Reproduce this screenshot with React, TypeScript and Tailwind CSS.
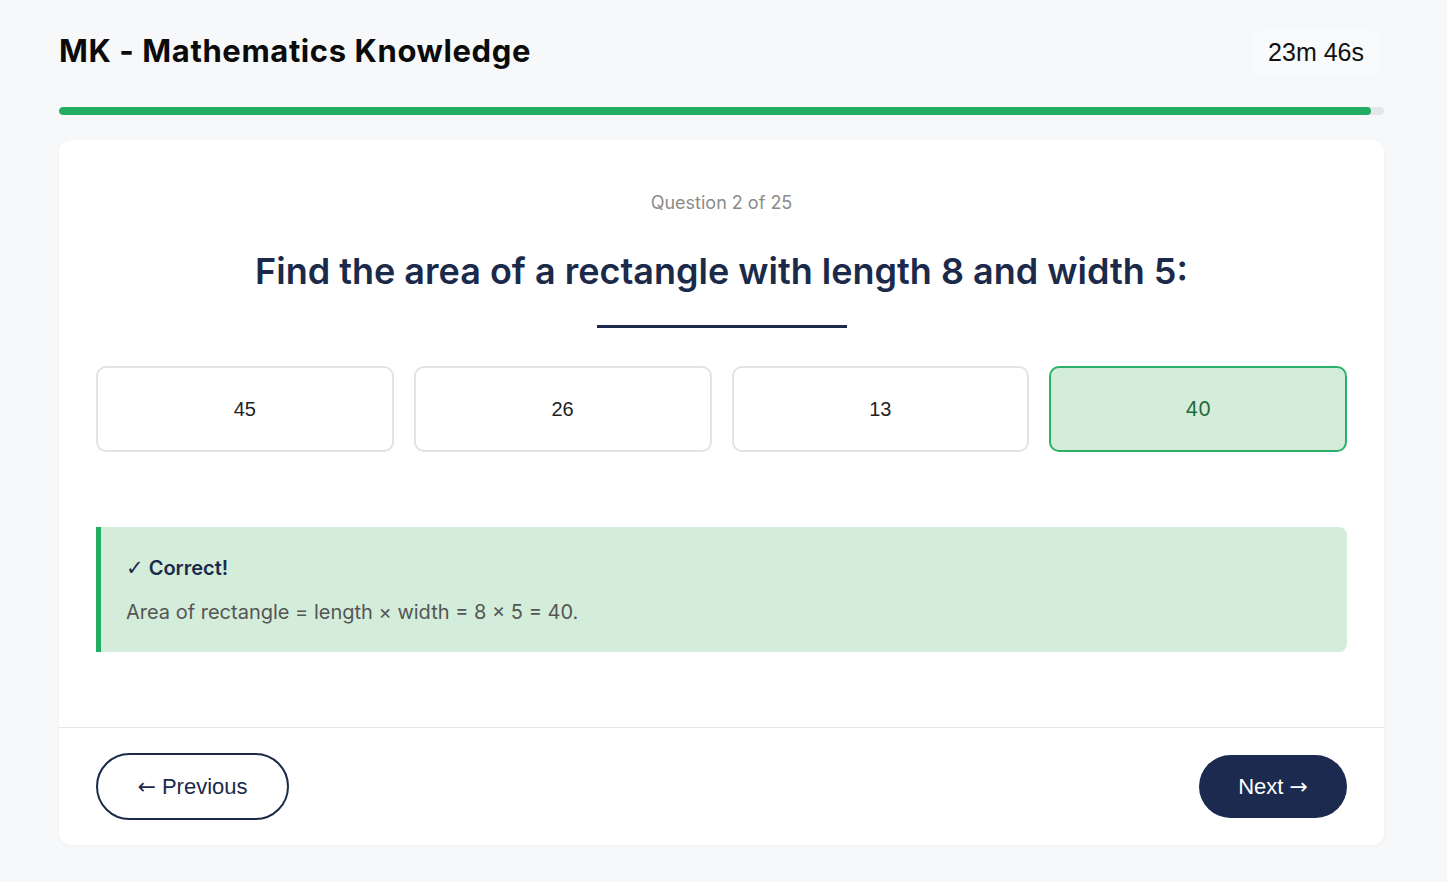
const OPTIONS = ['45', '26', '13', '40']
const SELECTED = '40'

export default function App() {
  return (
    <div className="min-h-screen bg-[#f7f8fa] pl-[59px] pr-[63px] pb-10">
      {/* Header */}
      <header className="flex h-[105px] items-center justify-between">
        <h1 className="pb-[2px] font-['Inter',sans-serif] text-[31px] font-bold tracking-[0.6px] text-[#0b0b0b]">
          MK - Mathematics Knowledge
        </h1>
        <div className="mr-[4px] flex h-[46px] items-center rounded-lg bg-[#f9fafb] px-[16px] font-['Liberation_Sans',Arial,sans-serif] text-[25px] text-[#111]">
          23m 46s
        </div>
      </header>

      {/* Progress */}
      <div className="mt-[2px] h-[8px] w-full overflow-hidden rounded-full bg-[#e4e6e9]">
        <div className="h-full w-[99%] rounded-full bg-[#22ad63]" />
      </div>

      {/* Card */}
      <main className="mt-[25px] rounded-xl bg-white shadow-[0_1px_4px_rgba(0,0,0,0.04)]">
        <div className="px-[37px] pt-[51px] pb-[75px]">
          <p className="text-center font-['Inter',sans-serif] text-[18px] leading-[24px] text-[#8b8b8b]">
            Question 2 of 25
          </p>
          <h2 className="mt-[35px] text-center font-['Inter',sans-serif] text-[36px] font-semibold leading-[43px] text-[#1b2a4a]">
            Find the area of a rectangle with length 8 and width 5:
          </h2>
          <div className="mx-auto mt-[32px] h-[3px] w-[250px] bg-[#1b2a4a]" />

          <div className="mt-[38px] grid grid-cols-4 gap-[20px]">
            {OPTIONS.map((opt) =>
              opt === SELECTED ? (
                <button
                  key={opt}
                  className="flex h-[86px] items-center justify-center rounded-[10px] border-2 border-[#2bb06a] bg-[#d4edda] font-['Inter',sans-serif] text-[20px] text-[#1d6b38]"
                >
                  {opt}
                </button>
              ) : (
                <button
                  key={opt}
                  className="flex h-[86px] items-center justify-center rounded-[10px] border-2 border-[#e3e3e3] bg-white font-['Liberation_Sans',Arial,sans-serif] text-[20px] text-[#222]"
                >
                  {opt}
                </button>
              )
            )}
          </div>

          {/* Feedback */}
          <div className="mt-[75px] flex h-[125px] flex-col justify-center rounded-r-lg border-l-[5px] border-[#22ad63] bg-[#d4edda] pl-[25px] font-['Inter',sans-serif]">
            <p className="text-[20px] font-semibold leading-[28px] text-[#1b2a4a]">
              <span className="font-['DejaVu_Sans',sans-serif] text-[21px] font-bold">✓</span> Correct!
            </p>
            <p className="mt-[16px] text-[20px] leading-[28px] text-[#555]">
              Area of rectangle = length × width = 8 × 5 = 40.
            </p>
          </div>
        </div>

        {/* Footer */}
        <div className="flex items-center justify-between border-t border-[#e6e6e6] px-[37px] pt-[25px] pb-[25px] font-['Liberation_Sans',Arial,sans-serif]">
          <button className="flex h-[67px] w-[193px] items-center justify-center gap-[6px] rounded-full border-2 border-[#1b2a4a] text-[22px] text-[#1b2a4a]">
            <span className="font-['DejaVu_Sans',sans-serif] text-[22px]">←</span>
            <span>Previous</span>
          </button>
          <button className="flex h-[63px] w-[148px] items-center justify-center gap-[6px] rounded-full bg-[#1b2a4e] text-[22px] text-white">
            <span>Next</span>
            <span className="font-['DejaVu_Sans',sans-serif] text-[22px]">→</span>
          </button>
        </div>
      </main>
    </div>
  )
}
